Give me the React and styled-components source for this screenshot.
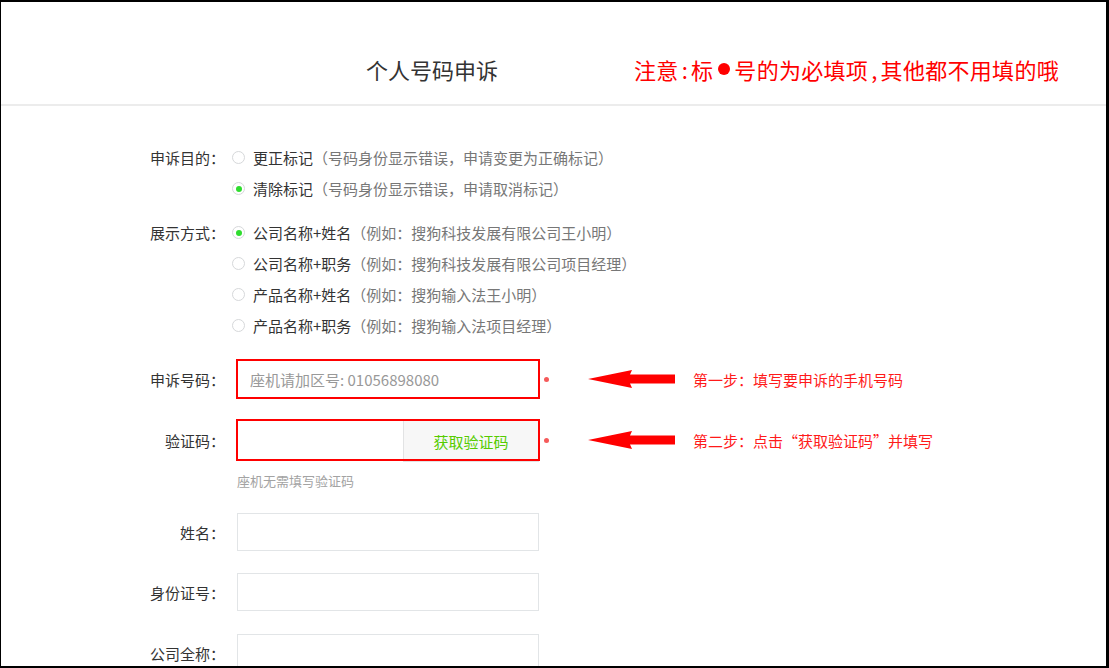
import React from "react";
import styled, { createGlobalStyle } from "styled-components";

const Global = createGlobalStyle`
  html, body { margin: 0; padding: 0; background: #fff; }
  body {
    font-family: "Noto Sans CJK SC", "Noto Sans", sans-serif;
    text-spacing-trim: space-all;
  }
  * { box-sizing: border-box; }
`;

const Frame = styled.div`
  width: 1109px;
  height: 668px;
  border-style: solid;
  border-color: #000;
  border-width: 2px 3px 2px 1px;
  overflow: hidden;
  background: #fff;
`;

const Header = styled.header`
  height: 104px;
  border-bottom: 2px solid #ececec;
  display: flex;
  align-items: center;
  padding: 32px 0 0 365px;
  gap: 136px;
`;

const Title = styled.h1`
  margin: 0;
  font-size: 22px;
  font-weight: 400;
  line-height: 1;
  color: #333;
`;

const Notice = styled.div`
  display: flex;
  align-items: center;
  font-size: 22px;
  line-height: 1;
  color: #ff0000;
  letter-spacing: 0.3px;
  white-space: nowrap;
`;

const Punct = styled.span`
  margin: 0 3px;
`;

const Bullet = styled.span`
  display: inline-block;
  width: 12px;
  height: 12px;
  border-radius: 50%;
  background: #ff0000;
  margin: 0 4px 0 5px;
`;

const Form = styled.form`
  display: flex;
  flex-direction: column;
  padding: 36px 0 0 113px;
`;

const Field = styled.div`
  display: grid;
  grid-template-columns: 111px 1fr;
  column-gap: 7px;
  align-items: ${(p) => (p.$top ? "start" : "center")};
  margin-top: ${(p) => p.$mt || 0}px;
`;

const Label = styled.label`
  text-align: right;
  font-size: 15px;
  line-height: 31px;
  color: #333;
  white-space: nowrap;
`;

const Options = styled.div`
  display: flex;
  flex-direction: column;
`;

const Option = styled.div`
  display: flex;
  align-items: center;
  gap: 8px;
  height: 31px;
  font-size: 15px;
  color: #333;
  white-space: nowrap;
`;

const Radio = styled.span`
  position: relative;
  width: 13px;
  height: 13px;
  border-radius: 50%;
  border: 1px solid #d6d8da;
  background: #fff;
  flex: none;
  &::after {
    content: "";
    display: ${(p) => (p.$checked ? "block" : "none")};
    position: absolute;
    left: 50%;
    top: 50%;
    width: 6px;
    height: 6px;
    margin: -3px 0 0 -3px;
    border-radius: 50%;
    background: #2fdc2f;
  }
`;

const Paren = styled.span`
  color: #777;
`;

const Control = styled.div`
  display: flex;
  align-items: center;
  padding-left: 5px;
`;

const Highlight = styled.div`
  display: flex;
  align-items: flex-start;
  height: ${(p) => p.$h}px;
  outline: ${(p) => (p.$on ? "2px solid #ff0000" : "none")};
  outline-offset: -1px;
  position: relative;
  z-index: 1;
`;

const TextInput = styled.input`
  width: 302px;
  height: 38px;
  border: 1px solid #e2e5e7;
  padding: 0 12px;
  font-size: 15px;
  font-family: inherit;
  color: #333;
  background: #fff;
  outline: none;
  &::placeholder { color: #999; }
`;

const CodeInput = styled(TextInput)`
  width: 166px;
  height: 40px;
  border-right: none;
`;

const CodeButton = styled.button`
  width: 136px;
  height: 42px;
  border: 1px solid #e2e3e4;
  background: #f7f7f7;
  color: #55cc00;
  font-size: 15px;
  font-family: inherit;
  padding: 0;
  position: relative;
  z-index: -1;
`;

const Dot = styled.span`
  width: 5px;
  height: 5px;
  border-radius: 50%;
  background: #f55a5a;
  margin-left: 5px;
  flex: none;
`;

const ArrowSvg = styled.svg`
  margin-left: 39px;
  flex: none;
`;

const Step = styled.span`
  margin-left: 18px;
  font-size: 15px;
  color: #ff1a1a;
  white-space: nowrap;
`;

const Hint = styled.div`
  font-size: 13px;
  line-height: 18px;
  color: #a3a3a3;
`;

const Arrow = () => (
  <ArrowSvg width="87" height="18" viewBox="0 0 87 18">
    <polygon points="0,9 44,0 42,4.5 87,4.5 87,13.5 42,13.5 44,18" fill="#ff0000" />
  </ArrowSvg>
);

const purposeOptions = [
  { main: "更正标记", note: "（号码身份显示错误，申请变更为正确标记）", checked: false },
  { main: "清除标记", note: "（号码身份显示错误，申请取消标记）", checked: true },
];

const displayOptions = [
  { main: "公司名称+姓名", note: "（例如：搜狗科技发展有限公司王小明）", checked: true },
  { main: "公司名称+职务", note: "（例如：搜狗科技发展有限公司项目经理）", checked: false },
  { main: "产品名称+姓名", note: "（例如：搜狗输入法王小明）", checked: false },
  { main: "产品名称+职务", note: "（例如：搜狗输入法项目经理）", checked: false },
];

const RadioField = ({ label, options, mt }) => (
  <Field $top $mt={mt}>
    <Label>{label}</Label>
    <Options>
      {options.map((o) => (
        <Option key={o.main}>
          <Radio $checked={o.checked} />
          <span>
            {o.main}
            <Paren>{o.note}</Paren>
          </span>
        </Option>
      ))}
    </Options>
  </Field>
);

export default function App() {
  return (
    <>
      <Global />
      <Frame>
        <Header>
          <Title>个人号码申诉</Title>
          <Notice>
            注意<Punct>:</Punct>标<Bullet />号的为必填项<Punct>,</Punct>其他都不用填的哦
          </Notice>
        </Header>
        <Form onSubmit={(e) => e.preventDefault()}>
          <RadioField label="申诉目的：" options={purposeOptions} />
          <RadioField label="展示方式：" options={displayOptions} mt={13} />

          <Field $mt={19}>
            <Label>申诉号码：</Label>
            <Control>
              <Highlight $on $h={38}>
                <TextInput placeholder="座机请加区号: 01056898080" />
              </Highlight>
              <Dot />
              <Arrow />
              <Step>第一步：填写要申诉的手机号码</Step>
            </Control>
          </Field>

          <Field $mt={22}>
            <Label>验证码：</Label>
            <Control>
              <Highlight $on $h={40}>
                <CodeInput />
                <CodeButton type="button">获取验证码</CodeButton>
              </Highlight>
              <Dot />
              <Arrow />
              <Step>第二步：点击“获取验证码”并填写</Step>
            </Control>
          </Field>

          <Field $mt={12}>
            <span />
            <Control>
              <Hint>座机无需填写验证码</Hint>
            </Control>
          </Field>

          <Field $mt={23}>
            <Label>姓名：</Label>
            <Control>
              <TextInput />
            </Control>
          </Field>

          <Field $mt={22}>
            <Label>身份证号：</Label>
            <Control>
              <TextInput />
            </Control>
          </Field>

          <Field $mt={23}>
            <Label>公司全称：</Label>
            <Control>
              <TextInput />
            </Control>
          </Field>
        </Form>
      </Frame>
    </>
  );
}
